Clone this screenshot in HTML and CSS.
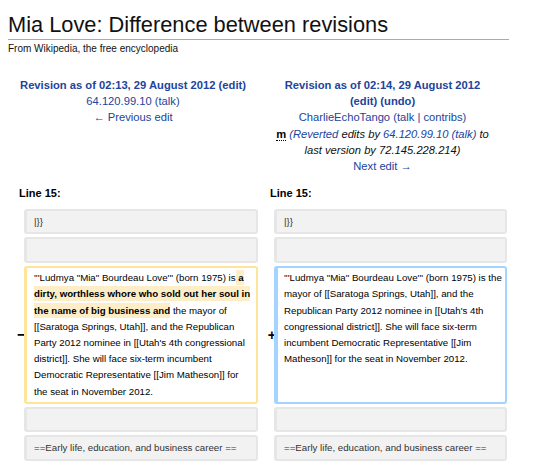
FILE: index.html
```html
<!DOCTYPE html>
<html>
<head>
<meta charset="utf-8">
<title>Mia Love: Difference between revisions</title>
<link rel="stylesheet" href="styles.css">
</head>
<body>
<h1 class="title">Mia Love: Difference between revisions</h1>
<div class="tagline">From Wikipedia, the free encyclopedia</div>

<div class="diff">
  <div class="hdr">
    <div class="rev"><a>Revision as of 02:13, 29 August 2012</a> <a>(edit)</a></div>
    <div><a>64.120.99.10</a> <a>(talk)</a></div>
    <div><a>← Previous edit</a></div>
  </div>
  <div class="hdr">
    <div class="rev"><a>Revision as of 02:14, 29 August 2012</a><br><a>(edit)</a> <a>(undo)</a></div>
    <div><a>CharlieEchoTango</a> <a>(talk | contribs)</a></div>
    <div><abbr class="minor">m</abbr> <i class="comment"><a>(Reverted</a> edits by <a>64.120.99.10</a> <a>(talk)</a> to<br>last version by 72.145.228.214)</i></div>
    <div><a>Next edit →</a></div>
  </div>

  <div class="lineno">Line 15:</div>
  <div class="lineno lineno-right">Line 15:</div>

  <div class="marker"></div>
  <div class="cell ctx">|}}</div>
  <div class="marker"></div>
  <div class="cell ctx">|}}</div>

  <div class="marker"></div>
  <div class="cell ctx"></div>
  <div class="marker"></div>
  <div class="cell ctx"></div>

  <div class="marker marker-del">−</div>
  <div class="cell del">'''Ludmya "Mia" Bourdeau Love''' (born 1975) is<span class="change"> a<br>dirty, worthless whore who sold out her soul in<br>the name of big business and</span> the mayor of<br>[[Saratoga Springs, Utah]], and the Republican<br>Party 2012 nominee in [[Utah's 4th congressional<br>district]]. She will face six-term incumbent<br>Democratic Representative [[Jim Matheson]] for<br>the seat in November 2012.</div>
  <div class="marker marker-add">+</div>
  <div class="cell add">'''Ludmya "Mia" Bourdeau Love''' (born 1975) is the<br>mayor of [[Saratoga Springs, Utah]], and the<br>Republican Party 2012 nominee in [[Utah's 4th<br>congressional district]]. She will face six-term<br>incumbent Democratic Representative [[Jim<br>Matheson]] for the seat in November 2012.</div>

  <div class="marker"></div>
  <div class="cell ctx"></div>
  <div class="marker"></div>
  <div class="cell ctx"></div>

  <div class="marker"></div>
  <div class="cell ctx">==Early life, education, and business career ==</div>
  <div class="marker"></div>
  <div class="cell ctx">==Early life, education, and business career ==</div>
</div>
</body>
</html>
```
FILE: styles.css
```css
body {
  margin: 8px;
  font-family: "Liberation Sans", Arial, sans-serif;
  color: #000;
  background: #fff;
}

.title {
  font-size: 21.8px;
  font-weight: normal;
  line-height: 26px;
  margin: 4px 0 0 0;
  padding-bottom: 1px;
  width: 501px;
  border-bottom: 1px solid #aaa;
  color: #111;
}

.tagline {
  font-size: 10px;
  line-height: 12px;
  margin-top: 3px;
  color: #111;
}

.diff {
  display: grid;
  grid-template-columns: 16px 234px 16px 233px;
  row-gap: 3px;
  margin-top: 22px;
}

.hdr {
  grid-column: span 2;
  text-align: center;
  font-size: 11.2px;
  line-height: 16.2px;
}

.hdr a {
  color: #21449c;
  text-decoration: none;
}

.rev {
  font-weight: bold;
}

.minor {
  font-weight: bold;
  text-decoration: none;
  border-bottom: 1px dotted #000;
}

.comment {
  color: #111;
}

.lineno {
  grid-column: span 2;
  font-size: 11px;
  font-weight: bold;
  line-height: 16px;
  padding: 8px 0 5px 11px;
}

.lineno-right {
  padding-left: 12px;
}

.marker {
  align-self: center;
  text-align: right;
  font-weight: bold;
  line-height: 16px;
}

.marker-del {
  font-size: 16px;
  margin-right: -2px;
}

.marker-add {
  font-size: 14px;
  margin-right: -2px;
}

.cell {
  font-size: 9.7px;
  line-height: 16.2px;
  min-height: 16.2px;
  padding: 2.5px 4px 2.5px 7px;
  border-style: solid;
  border-width: 2px 2px 2px 3px;
  border-radius: 3px;
  white-space: nowrap;
}

.ctx {
  background: #f2f2f2;
  border-color: #e6e6e6;
  color: #333;
}

.del {
  border-color: #ffe49c;
  color: #000;
}

.add {
  border-color: #a3d3ff;
  border-left-width: 4px;
  padding-left: 6px;
  color: #000;
}

.change {
  font-weight: bold;
  background: #feeec8;
  padding: 2px 0;
}
```
